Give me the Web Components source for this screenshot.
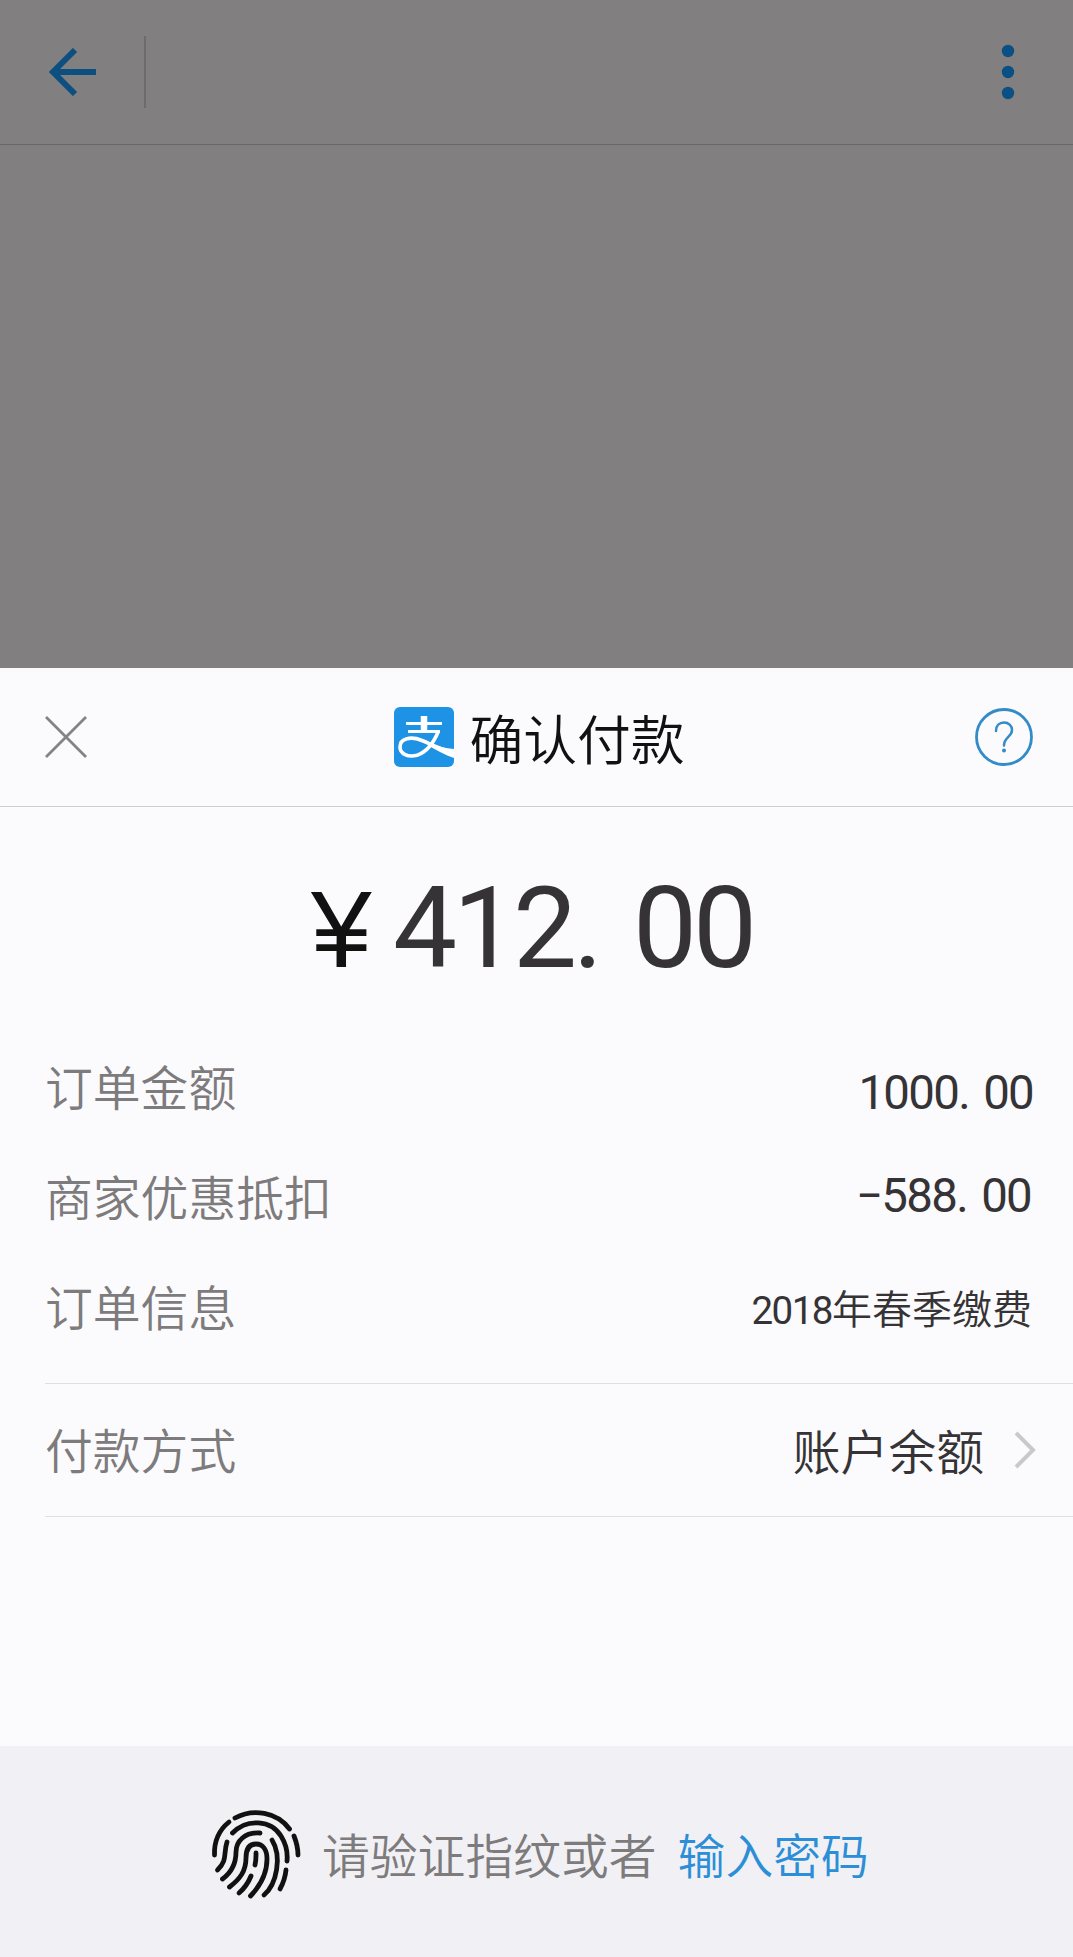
<!DOCTYPE html>
<html lang="zh-CN">
<head>
<meta charset="utf-8">
<title>确认付款</title>
<style>
	html, body {
		margin: 0;
		height: 100%;
	}
	body {
		font-family: "Noto Sans CJK SC", "Noto Sans", sans-serif;
		font-weight: 350;
		overflow: hidden;
	}
</style>
</head>
<body>
<pay-page></pay-page>

<script>
(function()  {
	function make(html) {
		let template = document.createElement("template");
		template.innerHTML = html;
		return template;
	}

	function register(name, template, init) {
		customElements.define(name, class extends HTMLElement {
			constructor() {
				super();
				this._shadowRoot = this.attachShadow({mode: "open"});
				this._shadowRoot.appendChild(template.content.cloneNode(true));
			}

			connectedCallback() {
				if (init) {
					init(this, this._shadowRoot);
				}
			}
		});
	}

	// dimmed title bar behind the sheet
	register("pay-topbar", make(`
		<style>
		:host {
			display: flex;
			align-items: center;
			box-sizing: border-box;
			height: 145px;
			padding: 0 58px 0 48px;
			border-bottom: 1px solid #686667;
		}
		.divider {
			width: 2px;
			height: 72px;
			margin-left: 48px;
			background: #6d6b6b;
		}
		.dots {
			margin-left: auto;
		}
		svg {
			display: block;
		}
		</style>
		<svg width="48" height="48" viewBox="0 0 48 48" fill="none" stroke="#0d5080" stroke-width="6">
			<path d="M48 24H5M27 2L5 24L27 46"/>
		</svg>
		<div class="divider"></div>
		<svg class="dots" width="14" height="58" viewBox="0 0 14 58" fill="#0b5084">
			<circle cx="7" cy="8" r="6.2"/>
			<circle cx="7" cy="29" r="6.2"/>
			<circle cx="7" cy="50" r="6.2"/>
		</svg>
	`));

	register("pay-header", make(`
		<style>
		:host {
			display: flex;
			align-items: center;
			justify-content: space-between;
			box-sizing: border-box;
			height: 139px;
			padding: 0 40px 0 45px;
			border-bottom: 1px solid #cfcdd0;
		}
		.title {
			display: flex;
			align-items: center;
			gap: 15px;
			margin-left: 17px;
			font-size: 53.8px;
			line-height: 64px;
			color: #111;
		}
		svg {
			display: block;
		}
		</style>
		<svg width="42" height="42" viewBox="0 0 42 42" fill="none" stroke="#858384" stroke-width="2.8">
			<path d="M1 1L41 41M41 1L1 41"/>
		</svg>
		<div class="title">
			<svg width="60" height="60" viewBox="0 0 60 60">
				<rect width="60" height="60" rx="6" fill="#1e93e6"/>
				<g fill="none" stroke="#fff">
					<path d="M12 16.5H48M14 24.5H46" stroke-width="3"/>
					<path d="M30 9V25" stroke-width="6.5"/>
					<path d="M44.500 24C40 35 33 45 23 48.200C14 50.500 6 47 6 40C6 31 17 29 28 33.500C38 37.500 46 42 60 46" stroke-width="3.600"/>
				</g>
				<path d="M36 36C44 39 51 41.500 60 42V51C51 48 42 43 33.500 38Z" fill="#fff"/>
			</svg>
			<span><slot></slot></span>
		</div>
		<svg width="58" height="58" viewBox="0 0 58 58" fill="none" stroke="#338bc8" stroke-width="2.8">
			<circle cx="29" cy="29" r="27.500"/>
			<path d="M21 23C21 17.500 24.500 14.500 29 14.500C33.500 14.500 37 17.500 37 22C37 29 29 29 29 37.500" stroke-linecap="round" stroke-width="2.500"/>
			<circle cx="29" cy="42.500" r="2" fill="#338bc8" stroke="none"/>
		</svg>
	`));

	// number with half-width digits, the point takes a whole digit cell
	register("pay-number", make(`
		<style>
		:host {
			display: block;
			white-space: nowrap;
			font-family: Roboto, "Liberation Sans", sans-serif;
			letter-spacing: -0.036em;
		}
		.point {
			margin-right: 0.3em;
		}
		</style>
		<span class="int"></span><span class="point">.</span><span class="frac"></span>
	`), function(host, root) {
		let parts = host.getAttribute("value").split(".");
		root.querySelector(".int").textContent = parts[0];
		root.querySelector(".frac").textContent = parts[1];
	});

	register("pay-amount", make(`
		<style>
		:host {
			display: flex;
			align-items: baseline;
			height: 225px;
			padding-left: 311px;
			box-sizing: border-box;
			font-size: 114px;
			line-height: 243px;
			font-weight: 400;
			color: #353335;
		}
		.yen {
			width: 82px;
			font-family: "Liberation Sans", sans-serif;
			font-size: 109px;
			color: #111;
		}
		</style>
		<span class="yen">¥</span>
		<slot></slot>
	`));

	register("pay-row", make(`
		<style>
		:host {
			display: flex;
			align-items: center;
			justify-content: space-between;
			height: 110px;
			margin-left: 45px;
			padding-right: 40px;
			color: #353335;
			font-size: 47.8px;
			line-height: 60px;
		}
		.label {
			padding-bottom: 2px;
			color: #7d7b7c;
		}
		</style>
		<span class="label"></span>
		<slot></slot>
	`), function(host, root) {
		root.querySelector(".label").textContent = host.getAttribute("label");
	});

	register("pay-chevron", make(`
		<style>
		:host {
			display: block;
		}
		svg {
			display: block;
		}
		</style>
		<svg width="22" height="38" viewBox="0 0 22 38" fill="none" stroke="#c9c8ca" stroke-width="4">
			<path d="M2 2L19 19L2 36"/>
		</svg>
	`));

	register("pay-fingerprint", make(`
		<style>
		:host {
			display: flex;
			align-items: center;
			box-sizing: border-box;
			height: 211px;
			padding: 4px 0 0 211px;
			background: #f1f0f4;
			color: #7d7b7c;
			font-size: 47.8px;
			line-height: 60px;
		}
		.hint {
			margin-left: 20px;
		}
		.link {
			margin-left: 21px;
			color: #2b8ed6;
		}
		</style>
		<svg width="91" height="91" viewBox="211 1808 91 91" fill="none" stroke="#111" stroke-width="4.8" stroke-linecap="round">
			<path d="M235 1818C253 1808 277 1812 289.500 1829"/>
			<path d="M229 1822C219 1830 214 1841 214.500 1855"/>
			<path d="M294 1836Q298 1846 298 1855"/>
			<path d="M232.500 1833C247 1818 271 1820 281 1836C286 1844 288 1851 287 1861"/>
			<path d="M227 1842C223 1854 228 1860 217.500 1870"/>
			<path d="M260 1833C245 1832 236 1841 236 1852C236 1863 232 1872 222.500 1879"/>
			<path d="M229.500 1887C240 1879 246 1871 246 1858C246 1849 249 1844 256 1844C263 1844 267 1850 267 1859C267 1875 260 1886 250.500 1896"/>
			<path d="M272 1840C282 1856 277 1884 264 1895"/>
			<path d="M256 1853V1855Q256 1861 255 1865"/>
			<path d="M251 1876Q247 1886 239 1893"/>
			<path d="M286 1870Q285 1880 280 1889"/>
		</svg>
		<span class="hint"><slot></slot></span>
		<span class="link"><slot name="link"></slot></span>
	`));

	register("pay-page", make(`
		<style>
		:host {
			display: flex;
			flex-direction: column;
			height: 1957px;
			background: #817f80;
		}
		.sheet {
			display: flex;
			flex-direction: column;
			height: 1289px;
			margin-top: auto;
			background: #fbfafc;
		}
		.money {
			font-size: 47.4px;
			font-weight: 400;
			padding-top: 12px;
		}
		.discount {
			padding: 0 2px 2px 0;
		}
		.info {
			padding: 4px 1px 0 0;
			font-size: 40px;
		}
		.year {
			font-family: Roboto, "Liberation Sans", sans-serif;
			font-size: 38.5px;
			font-weight: 400;
			letter-spacing: -1.5px;
		}
		.method {
			height: 132px;
			margin-top: 21px;
			border: solid #e0dfe1;
			border-width: 1px 0;
			padding-right: 37px;
		}
		.account {
			display: flex;
			align-items: center;
			gap: 30px;
		}
		pay-fingerprint {
			margin-top: auto;
		}
		</style>
		<pay-topbar></pay-topbar>
		<div class="sheet">
			<pay-header>确认付款</pay-header>
			<pay-amount><pay-number value="412.00"></pay-number></pay-amount>
			<div class="rows">
				<pay-row label="订单金额"><pay-number class="money" value="1000.00"></pay-number></pay-row>
				<pay-row label="商家优惠抵扣"><pay-number class="money discount" value="−588.00"></pay-number></pay-row>
				<pay-row label="订单信息"><span class="info"><span class="year">2018</span>年春季缴费</span></pay-row>
				<pay-row class="method" label="付款方式">
					<span class="account">账户余额<pay-chevron></pay-chevron></span>
				</pay-row>
			</div>
			<pay-fingerprint>请验证指纹或者<span slot="link">输入密码</span></pay-fingerprint>
		</div>
	`));
})();
</script>
</body>
</html>
